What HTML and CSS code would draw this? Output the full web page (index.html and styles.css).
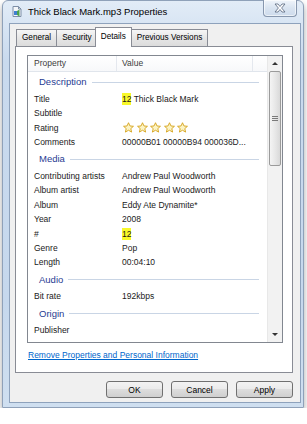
FILE: index.html
```html
<!DOCTYPE html>
<html lang="en">
<head>
  <meta charset="UTF-8">
  <title>Thick Black Mark.mp3 Properties</title>
  <link rel="stylesheet" href="styles.css">
</head>
<body>

<div class="window">
  <div class="titlebar">
    <svg class="app-icon" width="10" height="11" viewBox="0 0 10 11">
      <path d="M1 .5h5.5L9 3v7.5H1z" fill="#f4f6f9" stroke="#7d8ea6"/>
      <path d="M6.5 .5V3H9" fill="none" stroke="#7d8ea6"/>
      <rect x="2" y="5" width="3" height="4" fill="#3f7fd0"/>
      <path d="M5 5l2.5-1.5v7L5 9z" fill="#4aa34a"/>
    </svg>
    <span class="title">Thick Black Mark.mp3 Properties</span>
    <div class="close-btn">
      <svg width="12" height="10" viewBox="0 0 12 10">
        <polygon points="1,1 4,1 6,3.5 8,1 11,1 7.6,5 11,9 8,9 6,6.5 4,9 1,9 4.4,5" fill="#fff" stroke="#55657c" stroke-width=".8" stroke-linejoin="round"/>
      </svg>
    </div>
  </div>

  <div class="client">
    <div class="tabs">
      <div class="tab">General</div>
      <div class="tab">Security</div>
      <div class="tab active">Details</div>
      <div class="tab">Previous Versions</div>
    </div>

    <div class="panel">
      <div class="listbox">
        <div class="list">
          <div class="list-head">
            <span class="head-prop">Property</span>
            <span class="head-val">Value</span>
            <span class="head-rest"></span>
          </div>

          <div class="group">Description</div>
          <div class="row"><span>Title</span><span><mark>12</mark> Thick Black Mark</span></div>
          <div class="row"><span>Subtitle</span><span></span></div>
          <div class="row"><span>Rating</span>
            <span class="stars">
              <svg viewBox="0 0 12 12"><path d="M6 .8 7.6 4.3 11.4 4.7 8.5 7.2 9.4 11 6 9 2.6 11 3.5 7.2.6 4.7 4.4 4.3Z"/></svg>
              <svg viewBox="0 0 12 12"><path d="M6 .8 7.6 4.3 11.4 4.7 8.5 7.2 9.4 11 6 9 2.6 11 3.5 7.2.6 4.7 4.4 4.3Z"/></svg>
              <svg viewBox="0 0 12 12"><path d="M6 .8 7.6 4.3 11.4 4.7 8.5 7.2 9.4 11 6 9 2.6 11 3.5 7.2.6 4.7 4.4 4.3Z"/></svg>
              <svg viewBox="0 0 12 12"><path d="M6 .8 7.6 4.3 11.4 4.7 8.5 7.2 9.4 11 6 9 2.6 11 3.5 7.2.6 4.7 4.4 4.3Z"/></svg>
              <svg viewBox="0 0 12 12"><path d="M6 .8 7.6 4.3 11.4 4.7 8.5 7.2 9.4 11 6 9 2.6 11 3.5 7.2.6 4.7 4.4 4.3Z"/></svg>
            </span>
          </div>
          <div class="row"><span>Comments</span><span>00000B01 00000B94 000036D...</span></div>

          <div class="group">Media</div>
          <div class="row"><span>Contributing artists</span><span>Andrew Paul Woodworth</span></div>
          <div class="row"><span>Album artist</span><span>Andrew Paul Woodworth</span></div>
          <div class="row"><span>Album</span><span>Eddy Ate Dynamite*</span></div>
          <div class="row"><span>Year</span><span>2008</span></div>
          <div class="row"><span>#</span><span><mark>12</mark></span></div>
          <div class="row"><span>Genre</span><span>Pop</span></div>
          <div class="row"><span>Length</span><span>00:04:10</span></div>

          <div class="group">Audio</div>
          <div class="row"><span>Bit rate</span><span>192kbps</span></div>

          <div class="group">Origin</div>
          <div class="row"><span>Publisher</span><span></span></div>
        </div>

        <div class="scrollbar">
          <div class="arrow up"></div>
          <div class="track">
            <div class="thumb"><span class="grip"></span></div>
          </div>
          <div class="arrow down"></div>
        </div>
      </div>

      <a class="remove-link" href="#">Remove Properties and Personal Information</a>
    </div>

    <div class="buttons">
      <button>OK</button>
      <button>Cancel</button>
      <button>Apply</button>
    </div>
  </div>
</div>

</body>
</html>
```

FILE: styles.css
```css
* {
  box-sizing: border-box;
}

body {
  margin: 0;
  background: #fff;
  font-family: "Liberation Sans", Arial, sans-serif;
  font-size: 8.5px;
  color: #1a1a1a;
}

.window {
  width: 302px;
  height: 408px;
  margin-left: 2px;
  padding: 0 2px 4px 6px;
  border: 1px solid #8fa1b9;
  border-radius: 6px 6px 0 0;
  background: linear-gradient(#e2ecf7, #c9daee 60px, #c6d8ed 300px, #cfdff0);
  box-shadow: 0 4px 7px rgba(0, 0, 0, 0.35);
  display: flex;
  flex-direction: column;
}

.titlebar {
  height: 22px;
  display: flex;
  align-items: flex-start;
  margin-left: -6px;
  margin-right: -2px;
  padding-left: 9px;
}

.app-icon {
  margin-top: 5px;
  flex-shrink: 0;
}

.title {
  margin-left: 6px;
  margin-top: 5px;
  font-size: 9.5px;
  line-height: 11px;
  color: #000;
  flex: 1;
}

.close-btn {
  width: 34px;
  height: 17px;
  margin: -1px 6px 0 0;
  border: 1px solid #8797ae;
  border-top: none;
  border-radius: 0 0 4px 4px;
  background: linear-gradient(#f0f5fb, #d9e4f1 50%, #cddbec);
  display: flex;
  align-items: center;
  justify-content: center;
  box-shadow: inset 0 0 0 1px rgba(255, 255, 255, 0.6);
}

.client {
  flex: 1;
  background: #f0f0f0;
  border: 1px solid #8ea2bc;
  padding: 0 7px 4px 5px;
  display: flex;
  flex-direction: column;
}

.tabs {
  height: 22px;
  display: flex;
  align-items: flex-end;
  padding-left: 1px;
}

.tab {
  height: 17px;
  padding: 0 5px;
  margin-right: -1px;
  border: 1px solid #898c95;
  border-bottom: none;
  background: linear-gradient(#f6f6f6, #e6e6e6 50%, #dcdcdc);
  font-size: 8.2px;
  line-height: 15px;
  color: #000;
}

.tab.active {
  height: 20px;
  margin: 0 -1px -1px -2px;
  padding: 0 5px;
  background: #fff;
  line-height: 17px;
  z-index: 1;
}

.panel {
  height: 327px;
  background: #fff;
  border: 1px solid #898c95;
  padding: 8px 9px 0 11px;
}

.listbox {
  height: 288px;
  border: 1px solid #828790;
  display: flex;
  overflow: hidden;
}

.list {
  flex: 1;
  overflow: hidden;
}

.list-head {
  height: 16px;
  display: flex;
  border-bottom: 1px solid #e0e5ec;
  background: linear-gradient(#fff, #f7f8fa);
  color: #3c3c3c;
  line-height: 15px;
}

.head-prop {
  width: 89px;
  padding-left: 6px;
  border-right: 1px solid #e4e8ee;
}

.head-val {
  width: 136px;
  padding-left: 5px;
  border-right: 1px solid #e4e8ee;
}

.head-rest {
  flex: 1;
}

.group {
  height: 19.6px;
  padding: 0 8px 0 11px;
  display: flex;
  align-items: center;
  gap: 5px;
  font-size: 9.5px;
  color: #1f3b92;
}

.group::after {
  content: "";
  flex: 1;
  border-top: 1px solid #c9d5e5;
  margin-top: 1px;
}

.row {
  height: 14.4px;
  padding-left: 6px;
  display: grid;
  grid-template-columns: 88px 1fr;
  align-items: center;
  white-space: nowrap;
  overflow: hidden;
}

mark {
  background: #f8f82a;
  color: inherit;
  padding: 1px 0;
}

.stars {
  display: flex;
  gap: 2.5px;
  padding-left: 1px;
}

.stars svg {
  width: 11px;
  height: 11px;
}

.stars path {
  fill: #fcf4c4;
  stroke: #d5a31c;
  stroke-width: 1;
  stroke-linejoin: round;
}

.scrollbar {
  width: 15px;
  background: #f2f2f2;
  border-left: 1px solid #e8e8e8;
  display: flex;
  flex-direction: column;
}

.arrow {
  height: 15px;
  display: flex;
  align-items: center;
  justify-content: center;
}

.arrow::before {
  content: "";
  border-left: 3px solid transparent;
  border-right: 3px solid transparent;
}

.arrow.up::before {
  border-bottom: 3px solid #333;
}

.arrow.down::before {
  border-top: 3px solid #333;
}

.track {
  flex: 1;
  padding: 0 1px;
}

.thumb {
  height: 95px;
  border: 1px solid #9b9b9b;
  border-radius: 2px;
  background: linear-gradient(90deg, #f4f4f4, #e8e8e8 50%, #d9d9d9);
  display: flex;
  align-items: center;
  justify-content: center;
}

.grip {
  width: 6px;
  height: 5px;
  border-top: 1px solid #7a7a7a;
  border-bottom: 1px solid #7a7a7a;
  background: linear-gradient(#7a7a7a, #7a7a7a) center / 100% 1px no-repeat;
}

.remove-link {
  display: inline-block;
  margin: 7px 0 0 1px;
  line-height: 11px;
  color: #0066cc;
  text-decoration: underline;
}

.buttons {
  margin-top: 8px;
  display: flex;
  justify-content: flex-end;
  gap: 8px;
}

.buttons button {
  width: 57px;
  height: 17px;
  padding: 0;
  border: 1px solid #707070;
  border-radius: 3px;
  background: linear-gradient(#f3f3f3, #ebebeb 45%, #dddddd 50%, #cfcfcf);
  font-family: "Liberation Sans", Arial, sans-serif;
  font-size: 8.5px;
  color: #000;
}
```
